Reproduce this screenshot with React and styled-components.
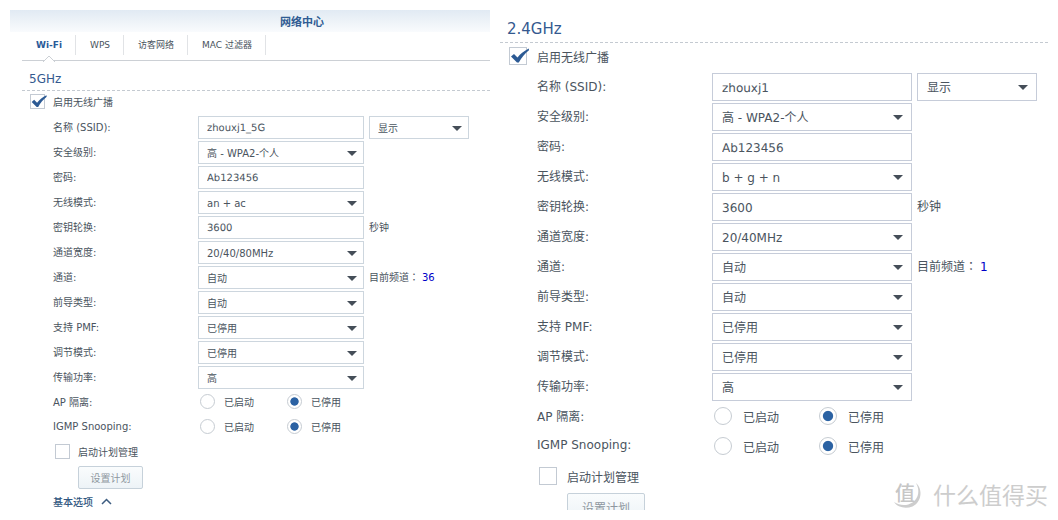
import React, { useId, useState } from 'react';
import styled, { createGlobalStyle, ThemeProvider } from 'styled-components';

const GlobalStyle = createGlobalStyle`
  * {
    box-sizing: border-box;
  }
  body {
    margin: 0;
    background: #fff;
    color: #4a545e;
    font-family: 'DejaVu Sans', 'Noto Sans CJK SC', sans-serif;
  }
  button, input, select {
    margin: 0;
    font-family: inherit;
    color: inherit;
  }
`;

const compact = {
  font: 10,
  heading: 12,
  headingHeight: 30,
  indent: 12,
  headingIndent: 7,
  row: 25,
  control: 23,
  field: 166,
  extra: 100,
  pad: 8,
  label: 145,
  labelLift: 2,
  inputTop: 1,
  box: 15,
  boxTop: 3,
  boxBottom: 6,
  boxIndent: 8,
  boxGap: 8,
  left: 31,
  radioIndent: 2,
  radioGap: 9,
  option: 87,
  planIndent: 2,
  planTop: 4,
  planBottom: 7,
  button: 65,
  buttonIndent: 25,
  arrowRight: 7,
  border: '#cdd6de',
};

const regular = {
  font: 12,
  heading: 15,
  headingHeight: 33,
  indent: 0,
  headingIndent: 7,
  row: 30,
  control: 28,
  field: 200,
  extra: 120,
  pad: 9,
  label: 175,
  labelLift: 4,
  inputTop: 1,
  box: 18,
  boxTop: 4,
  boxBottom: 7,
  boxIndent: 9,
  boxGap: 10,
  left: 37,
  radioIndent: 2,
  radioGap: 11,
  option: 105,
  planIndent: 2,
  planTop: 5,
  planBottom: 8,
  button: 78,
  buttonIndent: 30,
  arrowRight: 9,
  border: '#c6ccd9',
};

const Page = styled.div`
  position: relative;
  display: grid;
  grid-template-columns: minmax(0, 480fr) minmax(0, 548fr);
  gap: 10px;
  height: 100vh;
  padding: 10px;
`;
const Panel = styled.section`
  min-height: 0;
  overflow: hidden;
  font-size: ${({ theme }) => theme.font}px;
`;
const TitleBar = styled.h1`
  display: flex;
  align-items: center;
  justify-content: center;
  height: 22px;
  margin: 0;
  padding-left: 104px;
  font-size: 11px;
  color: #2f5c93;
  background: linear-gradient(#e1eaf3, #f9fbfd);
`;
const Tabs = styled.nav`
  display: flex;
  align-items: center;
  height: 29px;
  margin-left: 12px;
  border-bottom: 1px solid #ccd0d5;
`;
const Tab = styled.a`
  position: relative;
  display: flex;
  align-items: center;
  height: 29px;
  padding: 0 14px 3px;
  font-size: 9px;
  font-weight: ${(props) => (props.$active ? 'bold' : 'normal')};
  color: ${(props) => (props.$active ? '#2a5b99' : '#4a545e')};
  text-decoration: none;

  &::before {
    content: '';
    position: absolute;
    top: 3px;
    right: 0;
    width: 1px;
    height: 20px;
    background: #e1e3e6;
  }
`;
const Notch = styled.svg`
  position: absolute;
  left: 50%;
  bottom: -1px;
  margin-left: -6px;
`;
const Heading = styled.h2`
  display: flex;
  align-items: center;
  height: ${({ theme }) => theme.headingHeight}px;
  margin: 0 0 0 ${({ theme }) => theme.indent}px;
  padding: 6px 0 0 ${({ theme }) => theme.headingIndent}px;
  font-size: ${({ theme }) => theme.heading}px;
  font-weight: normal;
  color: #34598f;
  border-bottom: 1px dashed #c4cad1;
`;
const Form = styled.form`
  padding-left: ${({ theme }) => theme.indent}px;
`;
const CheckLabel = styled.label`
  display: flex;
  align-items: center;
  gap: ${({ theme }) => theme.boxGap}px;
`;
const EnableRow = styled.div`
  padding: ${({ theme }) => `${theme.boxTop}px 0 ${theme.boxBottom}px ${theme.boxIndent}px`};
`;
const Check = styled.span`
  position: relative;
  display: flex;
`;
const CheckBox = styled.input`
  appearance: none;
  width: ${({ theme }) => theme.box}px;
  height: ${({ theme }) => theme.box}px;
  background: #fff;
  border: 1px solid #c3cad3;
`;
const CheckMark = styled.svg`
  position: absolute;
  top: 0;
  left: 0;
  overflow: visible;
  pointer-events: none;
`;
const Rows = styled.div`
  padding-left: ${({ theme }) => theme.left}px;
`;
const Row = styled.div`
  display: flex;
  align-items: center;
  height: ${({ theme }) => theme.row}px;
`;
const RowLabel = styled.label`
  flex: none;
  width: ${({ theme }) => theme.label}px;
  padding-bottom: ${({ theme }) => theme.labelLift}px;
`;
const Input = styled.input`
  width: ${({ theme }) => theme.field}px;
  height: ${({ theme }) => theme.control}px;
  padding: ${({ theme }) => `${theme.inputTop}px ${theme.pad}px 0`};
  font-size: ${({ theme }) => theme.font}px;
  line-height: 18px;
  text-rendering: geometricPrecision;
  background: #fff;
  border: 1px solid ${({ theme }) => theme.border};
  outline: none;
`;
const SelectWrap = styled.div`
  position: relative;
  width: ${({ theme, $short }) => ($short ? theme.extra : theme.field)}px;
`;
const SelectBox = styled.select`
  display: block;
  appearance: none;
  width: 100%;
  height: ${({ theme }) => theme.control}px;
  padding: 1px 20px 0 ${({ theme }) => theme.pad}px;
  font-size: ${({ theme }) => theme.font}px;
  background: #fff;
  border: 1px solid ${({ theme }) => theme.border};
  border-radius: 0;
  outline: none;
`;
const Arrow = styled.svg`
  position: absolute;
  top: 50%;
  right: ${({ theme }) => theme.arrowRight}px;
  margin-top: -2px;
  pointer-events: none;
`;
const After = styled.div`
  display: flex;
  align-items: center;
  margin-left: 5px;
  white-space: pre;
`;
const Note = styled.span`
  padding-bottom: ${({ theme }) => theme.labelLift}px;
`;
const Colon = styled.span`
  font-family: 'Noto Sans CJK TC', sans-serif;
`;
const Channel = styled.span`
  margin-left: 3px;
  color: #0000c8;
`;
const Options = styled.div`
  display: flex;
  padding: 0 0 2px ${({ theme }) => theme.radioIndent}px;
`;
const Option = styled.label`
  display: flex;
  align-items: center;
  gap: ${({ theme }) => theme.radioGap}px;
  width: ${({ theme }) => theme.option}px;
`;
const Radio = styled.input`
  appearance: none;
  width: ${({ theme }) => theme.box}px;
  height: ${({ theme }) => theme.box}px;
  border: 1px solid #c6ccd2;
  border-radius: 50%;
  background: #fff;

  &:checked {
    background: radial-gradient(closest-side, #2b62a3 0 58%, #fff 70%);
  }
`;
const PlanRow = styled.div`
  padding: ${({ theme }) => `${theme.planTop}px 0 ${theme.planBottom}px ${theme.planIndent}px`};
`;
const PlanButton = styled.button`
  display: block;
  width: ${({ theme }) => theme.button}px;
  height: ${({ theme }) => theme.control}px;
  margin-left: ${({ theme }) => theme.buttonIndent}px;
  padding: 0;
  font-size: ${({ theme }) => theme.font}px;
  color: #8e979f;
  background: linear-gradient(#fafcfd, #edf3f7);
  border: 1px solid #c6d1da;
  border-radius: 2px;
`;
const Toggle = styled.button`
  display: flex;
  align-items: center;
  gap: 8px;
  height: 24px;
  padding: 0;
  font-size: 10px;
  font-weight: 500;
  color: #2f5680;
  background: none;
  border: 0;
`;
const Watermark = styled.div`
  position: absolute;
  right: 10px;
  bottom: 6px;
  display: flex;
  align-items: center;
  gap: 10px;
  font-family: 'Noto Sans CJK SC', sans-serif;
  font-size: 23px;
  line-height: 36px;
  color: #cdcdcd;
`;

const CheckField = ({ label, defaultChecked = false }) => {
  const [checked, setChecked] = useState(defaultChecked);

  return (
    <CheckLabel>
      <Check>
        <CheckBox type="checkbox" checked={checked} onChange={() => setChecked(!checked)} />
        {checked && (
          <CheckMark width="100%" height="100%" viewBox="0 0 18 18">
            <path d="M2 9.500 5 7 8.500 10.500C11.500 7 15 4 19.800 1.600L20 3.200C16 6.500 12.500 10.500 9.800 15.500H8Z" fill="#2c5a94" />
          </CheckMark>
        )}
      </Check>
      {label}
    </CheckLabel>
  );
};

const Select = ({ id, value, short, label }) => (
  <SelectWrap $short={short}>
    <SelectBox id={id} aria-label={label} defaultValue={value}>
      <option>{value}</option>
    </SelectBox>
    <Arrow width="10" height="5" viewBox="0 0 10 5">
      <path d="M0 0H10L5 5Z" fill="#454e58" />
    </Arrow>
  </SelectWrap>
);

const Field = ({ label, value, select, children }) => {
  const id = useId();

  return (
    <Row>
      <RowLabel htmlFor={id}>{label}</RowLabel>
      {select ? <Select id={id} value={value} /> : <Input id={id} type="text" defaultValue={value} />}
      {children && <After>{children}</After>}
    </Row>
  );
};

const RadioField = ({ label }) => {
  const name = useId();

  return (
    <Row role="radiogroup" aria-labelledby={`${name}-label`}>
      <RowLabel as="span" id={`${name}-label`}>{label}</RowLabel>
      <Options>
        <Option>
          <Radio type="radio" name={name} />
          已启动
        </Option>
        <Option>
          <Radio type="radio" name={name} defaultChecked />
          已停用
        </Option>
      </Options>
    </Row>
  );
};

const WifiSettings = ({ band, ssid, mode, width, channel, children }) => (
  <>
    <Heading>{band}</Heading>
    <Form onSubmit={(e) => e.preventDefault()}>
      <EnableRow>
        <CheckField label="启用无线广播" defaultChecked />
      </EnableRow>
      <Rows>
        <Field label="名称 (SSID):" value={ssid}>
          <Select short value="显示" label="显示" />
        </Field>
        <Field label="安全级别:" value="高 - WPA2-个人" select />
        <Field label="密码:" value="Ab123456" />
        <Field label="无线模式:" value={mode} select />
        <Field label="密钥轮换:" value="3600">
          <Note>秒钟</Note>
        </Field>
        <Field label="通道宽度:" value={width} select />
        <Field label="通道:" value="自动" select>
          <Note>
            目前频道<Colon>：</Colon>
            <Channel>{channel}</Channel>
          </Note>
        </Field>
        <Field label="前导类型:" value="自动" select />
        <Field label="支持 PMF:" value="已停用" select />
        <Field label="调节模式:" value="已停用" select />
        <Field label="传输功率:" value="高" select />
        <RadioField label="AP 隔离:" />
        <RadioField label="IGMP Snooping:" />
        <PlanRow>
          <CheckField label="启动计划管理" />
        </PlanRow>
        <PlanButton type="button">设置计划</PlanButton>
        {children}
      </Rows>
    </Form>
  </>
);

const App = () => (
  <Page>
    <GlobalStyle />
    <ThemeProvider theme={compact}>
      <Panel>
        <TitleBar>网络中心</TitleBar>
        <Tabs>
          <Tab href="#wifi" $active>
            Wi-Fi
            <Notch width="12" height="7" viewBox="0 0 12 7">
              <path d="M0 7 6 1 12 7" fill="#fff" stroke="#ccd0d5" />
            </Notch>
          </Tab>
          <Tab href="#wps">WPS</Tab>
          <Tab href="#guest">访客网络</Tab>
          <Tab href="#mac">MAC 过滤器</Tab>
        </Tabs>
        <WifiSettings band="5GHz" ssid="zhouxj1_5G" mode="an + ac" width="20/40/80MHz" channel="36">
          <Toggle type="button">
            基本选项
            <svg width="11" height="7" viewBox="0 0 11 7">
              <path d="M1 6 5.500 1.500 10 6" fill="none" stroke="#3c5c80" strokeWidth="1.500" />
            </svg>
          </Toggle>
        </WifiSettings>
      </Panel>
    </ThemeProvider>
    <ThemeProvider theme={regular}>
      <Panel>
        <WifiSettings band="2.4GHz" ssid="zhouxj1" mode="b + g + n" width="20/40MHz" channel="1" />
      </Panel>
    </ThemeProvider>
    <Watermark>
      <svg width="32" height="40" viewBox="0 0 32 40">
        <path d="M25 9C32 15 31 28 21.500 32.500 14.500 35 6.500 33.500 3 28 9 32 16 32 21.500 28.500 28 24 29 16 25 9Z" fill="#cdcdcd" />
        <text x="14" y="27" fontSize="20" fontWeight="500" textAnchor="middle" fill="#c6c6c6">值</text>
      </svg>
      什么值得买
    </Watermark>
  </Page>
);

export default App;
